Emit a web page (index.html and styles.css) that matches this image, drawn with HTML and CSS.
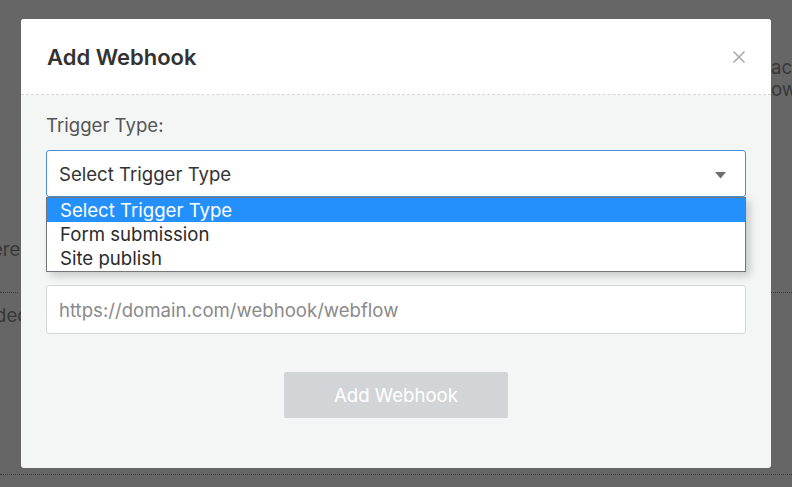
FILE: index.html
```html
<!DOCTYPE html>
<html>
<head>
<meta charset="utf-8">
<link rel="stylesheet" href="styles.css">
</head>
<body>
<div class="page">
  <div class="page-left">
    <div class="frag frag-ere">There</div>
    <div class="dots dots-left"></div>
    <div class="frag frag-dec">decide</div>
  </div>
  <div class="page-right">
    <div class="frag">accounts</div>
    <div class="frag">owners</div>
    <div class="dots dots-right"></div>
  </div>
</div>
<div class="page-bottom-dots"></div>

<div class="modal">
  <div class="modal-header">
    <h2 class="modal-title">Add Webhook</h2>
    <button class="close" aria-label="Close">
      <svg width="14" height="14" viewBox="0 0 14 14"><path d="M1.5 1.5 L12.5 12.5 M12.5 1.5 L1.5 12.5" stroke="#a9a9a9" stroke-width="1.6" fill="none"/></svg>
    </button>
  </div>
  <div class="modal-body">
    <div class="group group-first">
      <label class="label">Trigger Type:</label>
      <div class="select-wrap">
        <div class="select">
          <span>Select Trigger Type</span>
          <svg class="caret" width="11" height="7" viewBox="0 0 11 7"><path d="M0 0 H11 L5.5 6.5 Z" fill="#6d6d6d"/></svg>
        </div>
        <ul class="options">
          <li class="option selected">Select Trigger Type</li>
          <li class="option">Form submission</li>
          <li class="option">Site publish</li>
        </ul>
      </div>
    </div>
    <div class="group group-second">
      <label class="label">Destination URL:</label>
      <div class="input">https://domain.com/webhook/webflow</div>
    </div>
    <div class="actions">
      <button class="btn">Add Webhook</button>
    </div>
  </div>
</div>
</body>
</html>
```

FILE: styles.css
```css
* { box-sizing: border-box; }
html, body { margin: 0; padding: 0; }
body {
  width: 792px;
  height: 487px;
  overflow: hidden;
  background: #666666;
  font-family: "Inter", "Noto Sans", sans-serif;
  position: relative;
}
.page {
  display: flex;
  justify-content: space-between;
  height: 487px;
}
.page-left {
  width: 21px;
  overflow: hidden;
  padding-top: 238px;
}
.page-right {
  width: 21px;
  padding-top: 56px;
  overflow: hidden;
}
.frag {
  color: #383838;
  font-size: 18.6px;
  line-height: 22px;
  white-space: nowrap;
}
.frag-ere { margin-left: -31px; }
.frag-dec { margin-left: -5px; margin-top: 11px; }
.dots { border-top: 1px dotted #3a3a3a; }
.dots-left { width: 18px; margin-top: 32px; }
.dots-right { margin-top: 192px; }
.page-bottom-dots {
  position: absolute;
  left: 0; right: 0; top: 474px;
  border-top: 1px dotted #3c3c3c;
}

.modal {
  position: absolute;
  left: 21px;
  top: 19px;
  width: 750px;
  height: 449px;
  background: #f4f5f5;
  border-radius: 3px;
}
.modal-header {
  height: 76px;
  background: #ffffff;
  border-bottom: 1px dashed #d6d6d6;
  border-radius: 3px 3px 0 0;
  display: flex;
  align-items: center;
  justify-content: space-between;
  padding: 0 25px 0 26px;
}
.modal-title {
  margin: 0;
  font-size: 22px;
  font-weight: 600;
  color: #333333;
}
.close {
  border: 0;
  background: none;
  padding: 0;
  width: 14px;
  height: 14px;
  display: flex;
}
.modal-body {
  padding: 18px 25px 0 25px;
}
.label {
  display: block;
  font-size: 18.6px;
  line-height: 24px;
  color: #555555;
  margin-bottom: 13px;
}
.group-second { margin-top: 51px; }
.group-second .label { color: #f4f5f5; }
.select-wrap { position: relative; }
.select {
  height: 47px;
  background: #ffffff;
  border: 1px solid #4a8fd6;
  border-radius: 3px;
  display: flex;
  align-items: center;
  justify-content: space-between;
  padding: 0 19px 0 12px;
  font-size: 18.6px;
  color: #333333;
}
.caret { margin-top: 3px; }
.options {
  position: absolute;
  left: 0;
  top: 47px;
  width: 700px;
  margin: 0;
  padding: 0 0 1px 0;
  list-style: none;
  background: #ffffff;
  border: 1px solid #767676;
  box-shadow: 4px 4px 8px rgba(0,0,0,0.18);
  z-index: 2;
}
.option {
  height: 24px;
  line-height: 24px;
  padding-left: 13px;
  font-size: 18.6px;
  color: #2b2b2b;
}
.option.selected {
  background: #2390fb;
  color: #ffffff;
}
.input {
  height: 49px;
  background: #ffffff;
  border: 1px solid #d6d8da;
  border-radius: 3px;
  display: flex;
  align-items: center;
  padding-left: 12px;
  font-size: 18.6px;
  color: #8a8a8a;
}
.actions {
  display: flex;
  justify-content: center;
  margin-top: 38px;
}
.btn {
  width: 224px;
  height: 46px;
  border: 0;
  border-radius: 2px;
  background: #d2d5d8;
  color: #ffffff;
  font-family: "Inter", "Noto Sans", sans-serif;
  font-size: 18.6px;
}
```
